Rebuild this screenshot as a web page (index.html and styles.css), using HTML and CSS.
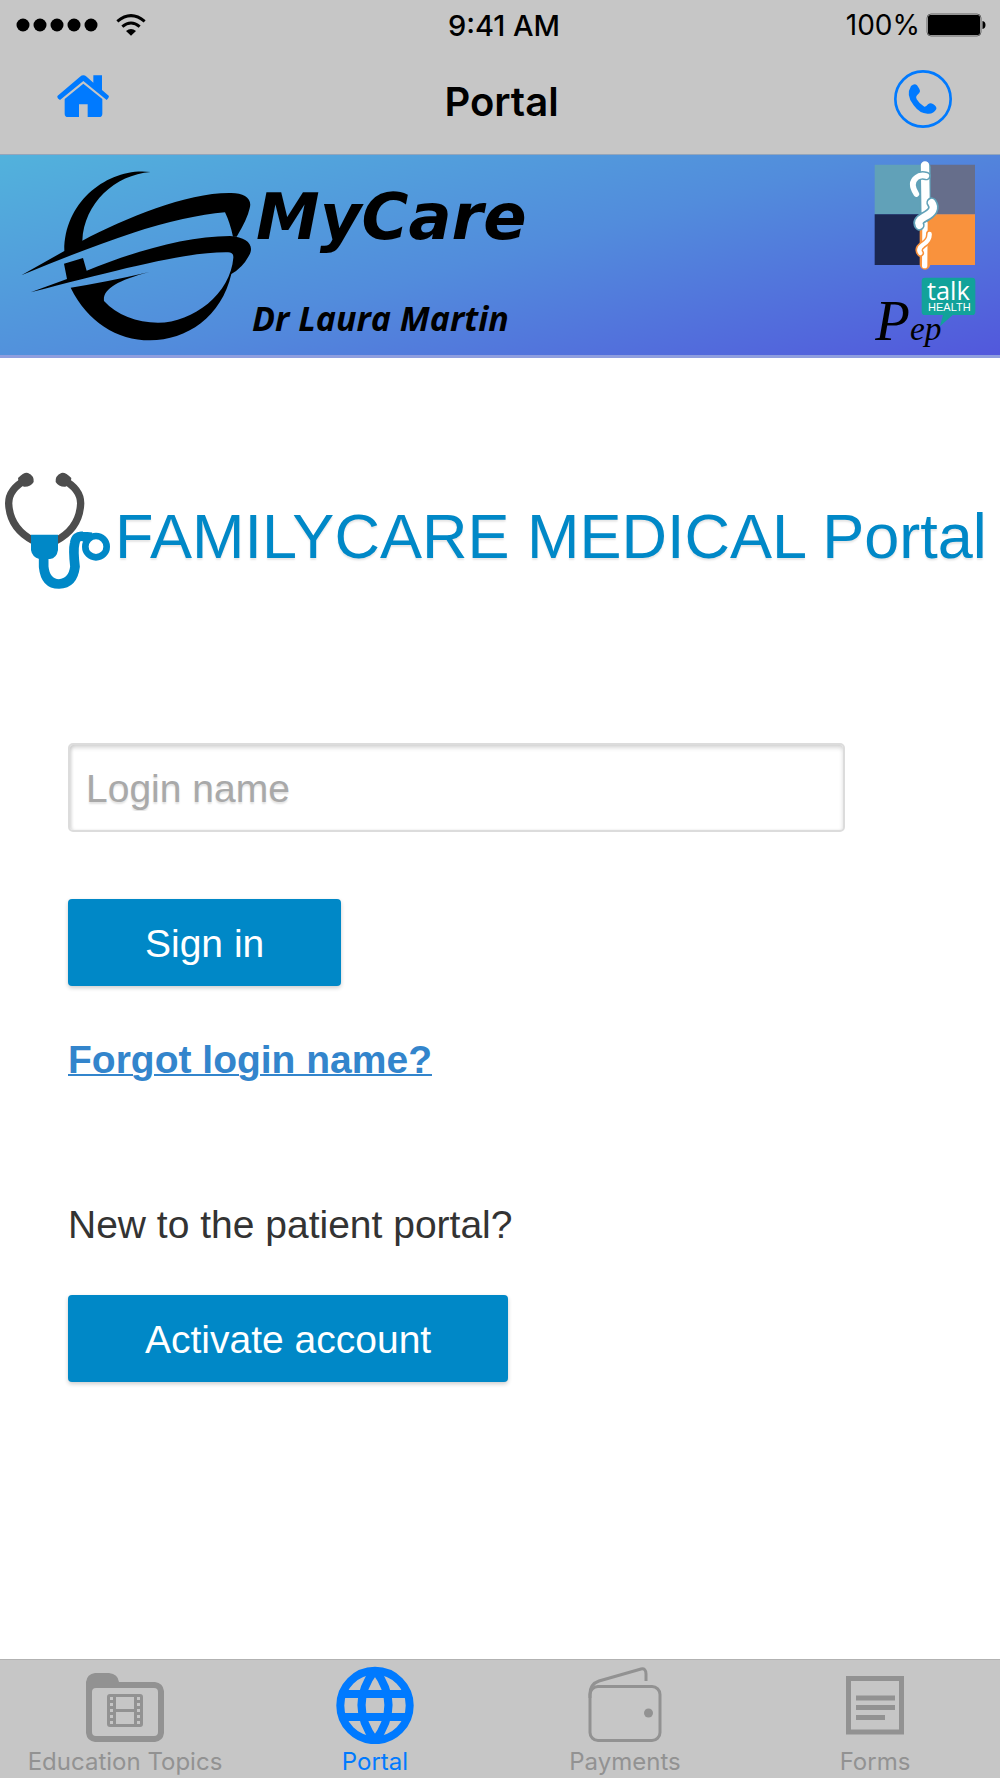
FILE: index.html
```html
<!DOCTYPE html>
<html lang="en">
<head>
<meta charset="utf-8">
<meta name="viewport" content="width=device-width, initial-scale=1">
<title>Portal</title>
<link rel="stylesheet" href="styles.css">
</head>
<body>
<header class="topbar">
  <div class="status">
    <div class="status-left">
      <svg width="82" height="14" viewBox="0 0 82 14" aria-hidden="true"><circle cx="7" cy="7" r="6.5"/><circle cx="24" cy="7" r="6.5"/><circle cx="41" cy="7" r="6.5"/><circle cx="58" cy="7" r="6.5"/><circle cx="75" cy="7" r="6.5"/></svg>
      <svg width="30" height="22" viewBox="0 0 90 66" aria-hidden="true"><g fill="none" stroke="#000" stroke-width="9"><path d="M4 22Q45-12 86 22"/><path d="M19 38Q45 16 71 38"/></g><path d="M30 51Q45 39 60 51L45 65Z"/></svg>
    </div>
    <time>9:41 AM</time>
    <div class="status-right">
      <span>100%</span>
      <svg width="60" height="24" viewBox="0 0 60 24" aria-hidden="true"><rect x="1" y="1" width="54" height="22" rx="4" fill="none" stroke="#666"/><rect x="2" y="2" width="52" height="20" rx="2.5"/><path d="M56.500 8Q59.500 8.500 59.500 12T56.500 16Z"/></svg>
    </div>
  </div>
  <nav class="navbar">
    <a href="#home" aria-label="Home"><svg width="52" height="42" viewBox="0 0 156 126" aria-hidden="true"><path fill="#007aff" d="M23 72L79 26L136 72V116Q136 126 126 126H92V88H66V126H33Q23 126 23 116ZM2 62L69 5Q79-3 89 5L109 23V1H135V45L155 62Q158 67 149 75L79 18L9 75Q-2 69 2 62Z"/></svg></a>
    <h1>Portal</h1>
    <a href="#call" aria-label="Call"><svg width="58" height="58" viewBox="0 0 174 174" aria-hidden="true"><circle cx="87" cy="87" r="83" fill="none" stroke="#007aff" stroke-width="8"/><path fill="#007aff" d="M51 48Q62 39 69 46Q78 58 78 64Q77 70 69 76Q64 81 68 88Q76 102 91 110Q96 111 102 103Q109 97 117 102Q129 110 127 117Q119 132 102 131Q78 132 59 106Q34 76 51 48Z"/></svg></a>
  </nav>
</header>
<section class="banner">
  <svg width="252" height="200" viewBox="0 15 756 600" aria-hidden="true">
    <path d="M452 66C330 50 192 150 193 303L64 376Q250 298 400 248Q560 197 675 187Q690 218 699 260H710Q742 208 749 175C758 145 732 128 690 129C560 128 380 203 247 272C252 160 345 74 452 66Z"/>
    <path d="M249 324L260 362C400 305 560 258 690 258C745 262 766 288 745 320Q728 352 694 372C665 500 560 571 450 571C350 571 262 515 212 413Q320 396 448 366C350 392 308 418 312 453C350 495 410 518 474 518C580 518 692 430 700 323Q701 307 684 307C560 305 360 358 92 427L201 387L192 341Z"/>
  </svg>
  <div class="brand">
    <p class="brand-name">MyCare</p>
    <p class="doctor">Dr Laura Martin</p>
  </div>
  <svg class="partners" width="150" height="200" viewBox="0 15 450 600" role="img" aria-label="Pep talk health">
    <path fill="#61a1b8" d="M74 44H224V193H74Z"/><path fill="#666e8b" d="M224 44H375V193H224Z"/><path fill="#1b2751" d="M74 193H224V345H74Z"/><path fill="#f9923d" d="M224 193H375V345H224Z"/>
    <g fill="none" stroke-linecap="round">
      <path stroke="#f9923d" stroke-width="32" d="M225 225V343"/>
      <path stroke="#61a1b8" stroke-width="34" d="M225 52V200"/>
      <path stroke="#fff" stroke-width="25" d="M225 46L227 185"/><path stroke="#fff" stroke-width="16" d="M225 220L224 347"/>
      <path stroke="#61a1b8" stroke-width="26" d="M199 132Q176 99 197 83Q211 73 229 78"/>
      <path stroke="#fff" stroke-width="17" d="M199 132Q178 99 199 83Q211 73 229 78"/>
      <path stroke="#61a1b8" stroke-width="32" d="M245 158Q262 182 223 201Q201 213 208 226"/>
      <path stroke="#fff" stroke-width="22" d="M245 158Q262 182 223 201Q201 213 208 226"/>
      <path stroke="#f9923d" stroke-width="22" d="M239 252Q240 272 218 285Q202 297 211 309"/>
      <path stroke="#fff" stroke-width="13" d="M239 252Q240 272 218 285Q202 297 211 309"/>
    </g>
    <text class="pep" x="76" y="569"><tspan class="pep-initial">P</tspan>ep</text>
    <path fill="#12a29a" d="M225 383H366Q376 383 376 393V485Q376 495 366 495H308L270 529L279 495H225Q215 495 215 485V393Q215 383 225 383Z"/>
    <text class="talk" x="295" y="449">talk</text>
    <text class="health" x="298" y="482">HEALTH</text>
  </svg>
</section>
<main>
  <h2 class="portal-title">
    <svg width="115" height="120" viewBox="0 60 345 360" aria-hidden="true">
      <path fill="none" stroke="#4d4d4d" stroke-width="22" d="M78 89Q26 117 26 160Q29 235 100 272M190 89Q242 117 242 160Q239 235 168 272"/>
      <path fill="#4d4d4d" d="M54 84Q73 65 84 69Q103 77 101 96Q92 111 72 110Q55 106 54 84ZM214 84Q195 65 184 69Q165 77 167 96Q176 111 196 110Q213 106 214 84Z"/>
      <path fill="#0088c7" d="M93 254H174V300Q170 325 150 327H118Q96 321 93 300Z"/>
      <path fill="none" stroke="#0088c7" stroke-width="29" d="M131 320V350Q136 401 177 402Q219 400 225 350Q219 300 224 280Q228 256 247 259L275 262"/>
      <circle cx="288" cy="290" r="32" fill="#fff" stroke="#0088c7" stroke-width="20"/>
    </svg>
    <span>FAMILYCARE MEDICAL Portal</span>
  </h2>
  <form class="login">
    <input type="text" name="login" placeholder="Login name" aria-label="Login name">
    <button type="button">Sign in</button>
    <a href="#forgot">Forgot login name?</a>
    <p>New to the patient portal?</p>
    <button type="button">Activate account</button>
  </form>
</main>
<nav class="tabs">
  <a href="#topics"><svg width="100" height="84" viewBox="0 0 100 84" aria-hidden="true"><path fill="#929292" fill-rule="evenodd" d="M20 13H34Q43 14 44 22H80Q88 23 89 31V73Q88 81 80 82H20Q12 81 11 73V22Q12 14 20 13ZM21 28Q17 28 17 32V72Q17 76 21 76H79Q83 76 83 72V32Q83 28 79 28Z"/><rect x="32" y="34" width="36" height="33" rx="3" fill="#929292"/><path fill="#c6c6c6" d="M41 37H59V49H41ZM41 52H59V64H41Z"/><path fill="none" stroke="#c6c6c6" stroke-width="3" stroke-dasharray="3 3" d="M36.500 37V66M63.500 37V66"/></svg>Education Topics</a>
  <a href="#portal" class="active" aria-current="page"><svg width="100" height="84" viewBox="0 0 100 84" aria-hidden="true"><g fill="none" stroke="#007aff" stroke-width="8"><circle cx="50" cy="45.500" r="34.700"/><path d="M18 34H82M18 57H82M50 10Q23 45 50 81M50 10Q77 45 50 81"/></g></svg>Portal</a>
  <a href="#payments"><svg width="100" height="84" viewBox="0 0 100 84" aria-hidden="true"><g fill="none" stroke="#929292" stroke-width="3"><rect x="15" y="26.500" width="70" height="54" rx="8"/><path d="M15 38V34Q15 24 24 21L66 9Q71 8 71 14V21"/></g><circle cx="73.500" cy="53" r="4.500" fill="#929292"/></svg>Payments</a>
  <a href="#forms"><svg width="100" height="84" viewBox="0 0 100 84" aria-hidden="true"><path fill="none" stroke="#929292" stroke-width="5" d="M23.500 18.500H76.500V72H23.500ZM31 38H70M31 47.500H70M31 57.500H60"/></svg>Forms</a>
</nav>
</body>
</html>
```
FILE: styles.css
```css
* { box-sizing: border-box; }
body {
  margin: 0;
  min-height: 100vh;
  display: flex;
  flex-direction: column;
  background: #fff;
  color: #333;
  font-family: "Liberation Sans", Arial, sans-serif;
}
h1, h2, p { margin: 0; font-weight: 400; }
svg { display: block; flex: none; }
.topbar {
  background: #c6c6c6;
  border-bottom: 1px solid #93a5bb;
  color: #000;
  font-family: Inter, sans-serif;
}
.status {
  display: grid;
  grid-template-columns: 1fr auto 1fr;
  align-items: center;
  height: 50px;
  padding: 0 14px 0 16px;
  font-size: 28px;
}
.status time { padding-left: 6px; font-size: 29px; font-weight: 500; }
.status-left, .status-right { display: flex; align-items: center; }
.status-left { gap: 18px; }
.status-right { justify-content: flex-end; gap: 6px; }
.navbar {
  display: flex;
  justify-content: space-between;
  height: 104px;
  padding: 20px 48px 0 57px;
}
.navbar a:first-child { padding-top: 5px; }
.navbar h1 { padding-top: 8px; font-size: 40px; line-height: 48px; font-weight: 600; }
.banner {
  display: flex;
  height: 203px;
  background: linear-gradient(165deg, #52b2dc, #528cdc 50%, #5258dc);
  border-bottom: 3px solid #8f9ede;
  color: #000;
}
.brand { flex: 1; padding-top: 22px; }
.brand-name {
  padding-left: 4px;
  font: italic bold 64px/80px "DejaVu Sans", sans-serif;
}
.doctor {
  padding-top: 37px;
  font: italic bold 34px/48px "Open Sans", sans-serif;
}
.pep { font: italic 100px "Liberation Serif", serif; }
.pep-initial { font-size: 170px; }
.talk { font: 76px "Open Sans", sans-serif; fill: #fff; text-anchor: middle; }
.health { font: 33px "Liberation Sans", sans-serif; fill: #fff; text-anchor: middle; }
main { flex: 1; }
.portal-title {
  display: flex;
  padding-top: 112px;
  color: #0088c7;
  font-size: 63px;
  line-height: 72px;
  white-space: nowrap;
  text-shadow: 0 2px 2px rgba(0, 0, 0, .1);
}
.portal-title span { padding-top: 30px; }
.login {
  display: flex;
  flex-direction: column;
  align-items: flex-start;
  padding: 153px 155px 48px 68px;
  font-size: 39px;
  line-height: 46px;
}
.login input {
  width: 100%;
  height: 89px;
  padding: 2px 16px 0;
  border: 2px solid #dcdcdc;
  border-radius: 5px;
  background: #fff;
  box-shadow: inset 0 3px 4px rgba(0, 0, 0, .15), inset 2px 0 3px rgba(0, 0, 0, .08);
  font: inherit;
}
.login input::placeholder { color: #a9a9a9; opacity: 1; text-shadow: 0 2px 2px rgba(0, 0, 0, .12); }
.login button {
  height: 87px;
  padding: 2px 77px 0;
  border: 0;
  border-radius: 4px;
  background: #0088c7;
  box-shadow: 0 2px 4px rgba(0, 0, 0, .2);
  color: #fff;
  font: inherit;
}
.login input + button { margin-top: 67px; }
.login a { margin-top: 51px; color: #3385cc; font-weight: 700; text-decoration-thickness: 2px; }
.login p { margin: 119px 0 47px; }
.tabs {
  display: grid;
  grid-template-columns: repeat(4, 1fr);
  background: #c6c6c6;
  border-top: 1px solid #b2b2b2;
  font: 24px/32px Inter, sans-serif;
}
.tabs a {
  display: flex;
  flex-direction: column;
  align-items: center;
  gap: 2px;
  color: #929292;
  text-decoration: none;
}
.tabs .active { color: #007aff; }
```
